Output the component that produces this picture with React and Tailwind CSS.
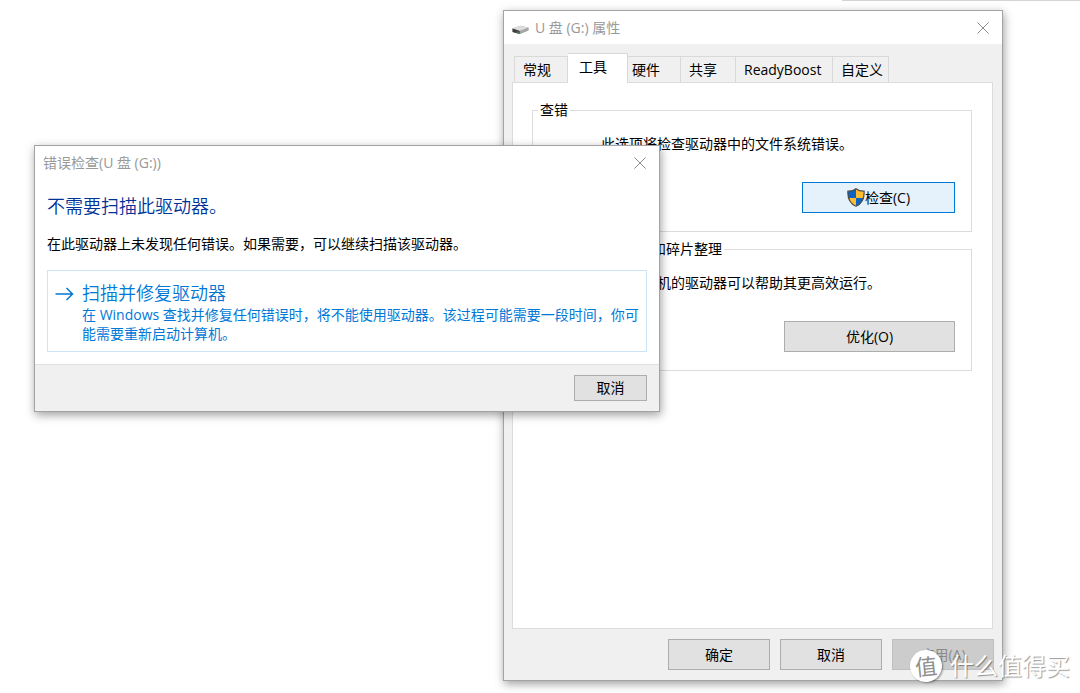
import { useState } from 'react';

const buttonBase = 'flex items-center justify-center border text-sm leading-5';
const plainButton = 'border-[#adadad] bg-[#e1e1e1] text-black';

const tabs = [
  { label: '常规', box: 'w-[54px] border-l pl-2' },
  { label: '工具', box: 'w-[60px] pl-[11px]' },
  { label: '硬件', box: 'w-[53px] pl-1' },
  { label: '共享', box: 'w-[55px] pl-2' },
  { label: 'ReadyBoost', box: 'w-[97px] pl-2' },
  { label: '自定义', box: 'w-14 pl-2' },
];

function CloseButton() {
  return (
    <button type="button" aria-label="关闭" className="flex size-5 items-center justify-center text-[#8c8c8c]">
      <svg viewBox="0 0 12 12" className="size-3" fill="none" stroke="currentColor" strokeWidth="1">
        <path d="M0.4 0.4 11.6 11.6M11.6 0.4 0.4 11.6" />
      </svg>
    </button>
  );
}

function DriveIcon() {
  return (
    <svg viewBox="0 0 17 10" className="h-[10px] w-[17px]">
      <path d="M0.5 3.6 8.5 0.8 16.5 2.8 16.3 5.4 7.6 9 0.6 7z" fill="#8a8a8a" />
      <path d="M0.5 3.6 8.5 0.8 16.5 2.8 7.8 6z" fill="#dedede" />
      <path d="M0.5 3.6 7.8 6 7.6 9 0.6 7z" fill="#3c3c3c" />
      <path d="M7.8 6 16.5 2.8 16.3 5.4 7.6 9z" fill="#a8a8a8" />
      <path d="M4.6 6.3 6.6 7 6.5 8 4.6 7.4z" fill="#37b34a" />
    </svg>
  );
}

function ShieldIcon() {
  return (
    <svg viewBox="0 0 18 19" className="h-[19px] w-[18px] shrink-0">
      <defs>
        <clipPath id="shield">
          <path d="M9 0.7C7 2.4 4 3.3 0.9 3.2 0.5 10 2.3 15.4 9 18.2 15.7 15.4 17.5 10 17.1 3.2 14 3.3 11 2.4 9 0.7z" />
        </clipPath>
      </defs>
      <g clipPath="url(#shield)">
        <path d="M0 0h9v10H0zM9 10h9v9H9z" fill="#0c63c4" />
        <path d="M9 0h9v10H9zM0 10h9v9H0z" fill="#fdbb2f" />
      </g>
      <path
        d="M9 0.7C7 2.4 4 3.3 0.9 3.2 0.5 10 2.3 15.4 9 18.2 15.7 15.4 17.5 10 17.1 3.2 14 3.3 11 2.4 9 0.7z"
        fill="none"
        stroke="#4d4d4d"
        strokeWidth="1.2"
      />
    </svg>
  );
}

function ToolGroup({ title, text, children }) {
  return (
    <fieldset className="border border-[#dcdcdc] pr-4 pb-[18px]">
      <legend className="ml-[5px] px-0.5 leading-5">{title}</legend>
      <p className="pt-[14px] pl-[68px] leading-5">{text}</p>
      <div className="mt-7 flex justify-end">{children}</div>
    </fieldset>
  );
}

function PropertiesWindow() {
  const [active, setActive] = useState('工具');
  return (
    <section className="absolute top-[10px] left-[503px] flex min-h-[671px] w-[500px] flex-col border border-[#a3a3a3] bg-[#f0f0f0] shadow-[1px_3px_9px_rgba(0,0,0,0.38)]">
      <header className="flex h-[33px] items-center bg-white pr-[9px] pl-2">
        <div className="flex flex-1 items-center gap-1.5">
          <div className="pt-1">
            <DriveIcon />
          </div>
          <h1 className="text-sm leading-5 text-[#999999]">U 盘 (G:) 属性</h1>
        </div>
        <CloseButton />
      </header>

      <div className="flex flex-1 flex-col px-2 pt-[9px] pb-[10px]">
        <div role="tablist" className="-mb-px flex items-end pl-0.5">
          {tabs.map((tab) => (
            <button
              key={tab.label}
              type="button"
              role="tab"
              aria-selected={active === tab.label}
              onClick={() => setActive(tab.label)}
              className={`${tab.box} border-t border-r border-[#d9d9d9] text-left text-sm leading-5 ${
                active === tab.label ? 'relative h-[30px] bg-white pb-1' : 'h-[27px] border-b bg-[#f0f0f0]'
              }`}
            >
              {tab.label}
            </button>
          ))}
        </div>

        <div role="tabpanel" className="mr-px flex flex-1 flex-col gap-[7px] border border-[#dcdcdc] bg-white pt-[17px] pr-5 pl-[19px] text-sm">
          <ToolGroup title="查错" text="此选项将检查驱动器中的文件系统错误。">
            <button type="button" className={`${buttonBase} h-[31px] w-[153px] border-[#0078d7] bg-[#e5f1fb]`}>
              <ShieldIcon />
              检查(C)
            </button>
          </ToolGroup>
          <ToolGroup title="对驱动器进行优化和碎片整理" text="优化计算机的驱动器可以帮助其更高效运行。">
            <button type="button" className={`${buttonBase} ${plainButton} h-[31px] w-[171px]`}>
              优化(O)
            </button>
          </ToolGroup>
        </div>

        <footer className="mt-[10px] flex justify-end gap-[10px]">
          <button type="button" className={`${buttonBase} ${plainButton} h-[31px] w-[102px]`}>确定</button>
          <button type="button" className={`${buttonBase} ${plainButton} h-[31px] w-[102px]`}>取消</button>
          <button type="button" disabled className={`${buttonBase} h-[31px] w-[102px] border-[#bfbfbf] bg-[#cccccc] text-[#8a8a8a]`}>
            应用(A)
          </button>
        </footer>
      </div>
    </section>
  );
}

function CheckDialog() {
  return (
    <section role="dialog" aria-labelledby="check-title" className="absolute top-[145px] left-[34px] w-[626px] border border-[#a3a3a3] bg-white text-sm shadow-[1px_3px_9px_rgba(0,0,0,0.38)]">
      <header className="flex h-[33px] items-center justify-between pr-[9px] pl-2">
        <h1 id="check-title" className="text-sm leading-5 text-[#999999]">错误检查(U 盘 (G:))</h1>
        <CloseButton />
      </header>
      <div className="px-3 pb-3">
        <h2 className="pt-[15px] text-lg leading-6 font-[350] text-[#003399]">不需要扫描此驱动器。</h2>
        <p className="mt-4 leading-5">在此驱动器上未发现任何错误。如果需要，可以继续扫描该驱动器。</p>
        <button type="button" className="mt-4 flex w-full gap-2 border border-[#cce4f7] pt-[10px] pr-0.5 pb-2 pl-[7px] text-left text-[#0078d7]">
          <svg viewBox="0 0 19 14" className="mt-[6px] h-[14px] w-[19px] shrink-0" fill="none" stroke="currentColor" strokeWidth="1.5">
            <path d="M0.5 7H17.5M11.5 1 17.5 7 11.5 13" />
          </svg>
          <span>
            <span className="block text-lg leading-6 font-[350]">扫描并修复驱动器</span>
            <span className="block leading-[19px]">
              在 Windows 查找并修复任何错误时，将不能使用驱动器。该过程可能需要一段时间，你可能需要重新启动计算机。
            </span>
          </span>
        </button>
      </div>
      <footer className="flex justify-end border-t border-[#dfdfdf] bg-[#f0f0f0] py-[10px] pr-3">
        <button type="button" className={`${buttonBase} ${plainButton} h-[26px] w-[73px]`}>取消</button>
      </footer>
    </section>
  );
}

function Watermark() {
  return (
    <div className="pointer-events-none absolute right-[10px] bottom-[11px] flex items-center gap-2">
      <span className="flex size-8 -rotate-6 items-center justify-center rounded-full bg-white text-[22px] leading-8 text-[#8f8f8f] shadow-[1px_1px_2px_rgba(0,0,0,0.4)]">
        值
      </span>
      <span className="text-2xl leading-8 text-white [text-shadow:1px_1px_1px_rgba(0,0,0,0.4)]">什么值得买</span>
    </div>
  );
}

export default function App() {
  return (
    <main className="relative min-h-screen overflow-hidden bg-white font-['Open_Sans','Noto_Sans_CJK_SC',sans-serif] text-black">
      <div className="ml-[78%] h-px bg-[#d4d4d4]" />
      <PropertiesWindow />
      <CheckDialog />
      <Watermark />
    </main>
  );
}
